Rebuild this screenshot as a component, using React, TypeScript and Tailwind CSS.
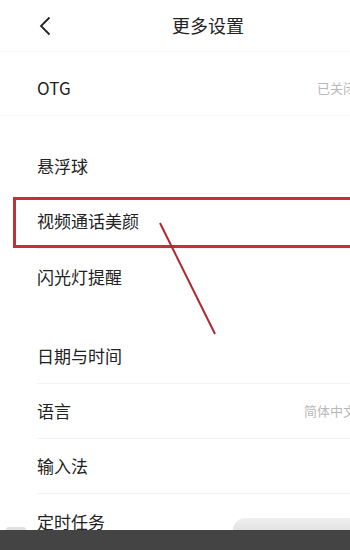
import React from 'react';

type Row = { label: string; value?: string; last?: boolean };

const SettingRow = ({ label, value, last }: Row) => (
  <div className="pl-[37px]">
    <div
      className={`flex h-[55px] items-center justify-between ${last ? '' : 'border-b border-[#f3f3f3]'}`}
    >
      <span className="text-[17px] text-[#222]">{label}</span>
      {value && <span className="mr-[-6px] shrink-0 text-[13px] text-[#b8b8b8]">{value}</span>}
    </div>
  </div>
);

export default function App() {
  return (
    <div
      className="relative flex h-[550px] w-[350px] flex-col overflow-hidden bg-white"
      style={{ fontFamily: '"Noto Sans CJK SC", "Liberation Sans", sans-serif' }}
    >
      <div className="flex h-[52px] shrink-0 items-center border-b border-[#f5f5f5] pl-[39px]">
        <svg width="12" height="20" viewBox="0 0 12 20">
          <path d="M10.5 1.5 L2 10 L10.5 18.5" fill="none" stroke="#222" strokeWidth="1.8" />
        </svg>
        <span className="ml-[121px] text-[18px] text-[#222]">更多设置</span>
      </div>
      <div className="mt-[8px] flex h-[56px] shrink-0 items-center justify-between border-b border-[#f5f5f5] pl-[37px]">
        <span className="text-[17px] text-[#222]">OTG</span>
        <span className="mr-[-6px] shrink-0 text-[13px] text-[#b8b8b8]">已关闭</span>
      </div>
      <div className="h-[23px] shrink-0" />
      <SettingRow label="悬浮球" />
      <SettingRow label="视频通话美颜" />
      <SettingRow label="闪光灯提醒" last />
      <div className="h-[25px] shrink-0" />
      <SettingRow label="日期与时间" />
      <SettingRow label="语言" value="简体中文" />
      <SettingRow label="输入法" />
      <SettingRow label="定时任务" last />

      {/* annotation box and arrow */}
      <div className="absolute left-[13px] top-[197px] h-[51px] w-[360px] border-[3.5px] border-[#c2303a]" />
      <svg className="absolute left-0 top-0" width="350" height="550" viewBox="0 0 350 550">
        <line x1="160" y1="223" x2="215" y2="334" stroke="#b2262f" strokeWidth="2" />
      </svg>

      {/* bottom overlay */}
      <div className="absolute bottom-[20px] left-[233px] h-[12px] w-[140px] rounded-tl-[14px] bg-gradient-to-b from-[#f0f0f0] to-[#e2e2e2]" />
      <div className="absolute bottom-[20px] left-[6px] h-[3px] w-[20px] rounded-t-full bg-[#e0e0e0]" />
      <div className="absolute bottom-0 left-0 h-[20px] w-full bg-[#444]" />
    </div>
  );
}
